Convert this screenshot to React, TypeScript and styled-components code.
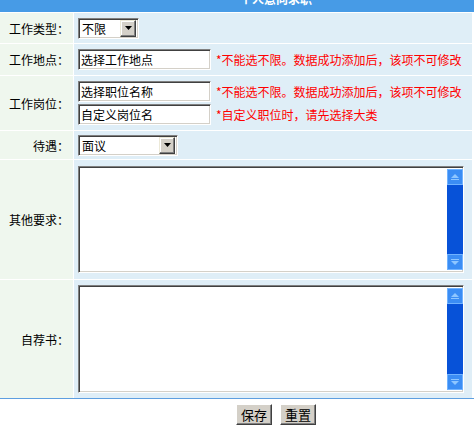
import React from "react";
import styled, { createGlobalStyle } from "styled-components";

const Global = createGlobalStyle`
  html, body { margin: 0; padding: 0; background: #ffffff; }
  body { font-family: "Noto Sans CJK SC", "Noto Sans", sans-serif; font-size: 12px; color: #000; }
  * { box-sizing: border-box; }
`;

const FONT = `"Noto Sans CJK SC", "Noto Sans", sans-serif`;

const Page = styled.div`
  width: 474px;
  background: #ffffff;
`;

const TitleBar = styled.div`
  height: 12px;
  background: #479be6;
  overflow: hidden;
  padding-left: 78px;
  text-align: center;
`;

const TitleText = styled.div`
  color: #ffffff;
  font-weight: bold;
  font-size: 12px;
  line-height: 12px;
  margin-top: -7px;
  font-family: ${FONT};
`;

const FormGrid = styled.div`
  width: 472px;
  display: grid;
  grid-template-columns: 73px 398px;
  column-gap: 1px;
  row-gap: 1px;
  padding-top: 1px;
  background: #ffffff;
`;

const Label = styled.div<{ $h: number }>`
  height: ${(p) => p.$h}px;
  background: #eff7ee;
  display: flex;
  align-items: center;
  justify-content: flex-end;
  padding-right: 4px;
  font-size: 12px;
  white-space: nowrap;
`;

const Field = styled.div<{ $h: number; $stack?: boolean }>`
  height: ${(p) => p.$h}px;
  background: #dfeef7;
  display: flex;
  flex-direction: ${(p) => (p.$stack ? "column" : "row")};
  align-items: ${(p) => (p.$stack ? "flex-start" : "center")};
  justify-content: ${(p) => (p.$stack ? "center" : "flex-start")};
  gap: ${(p) => (p.$stack ? "2px" : "5px")};
  padding-left: 4px;
`;

const SubRow = styled.div`
  display: flex;
  align-items: center;
  gap: 5px;
`;

const insetBorder = `
  border: 1px solid;
  border-color: #808080 #ffffff #ffffff #808080;
  box-shadow: inset 1px 1px 0 #404040, inset -1px -1px 0 #d4d0c8;
`;

const TextInput = styled.input`
  width: 133px;
  height: 21px;
  ${insetBorder}
  background: #ffffff;
  padding: 0 2px;
  font-family: ${FONT};
  font-size: 12px;
  color: #000;
  outline: none;
`;

const Note = styled.span`
  color: #ff0000;
  font-size: 12px;
  white-space: nowrap;
`;

const SelectBox = styled.div<{ $w: number }>`
  width: ${(p) => p.$w}px;
  height: 21px;
  ${insetBorder}
  background: #ffffff;
  display: flex;
  align-items: center;
  padding: 2px;
`;

const SelectValue = styled.span`
  flex: 1;
  font-size: 12px;
  padding-left: 1px;
  line-height: 15px;
  white-space: nowrap;
`;

const DropButton = styled.span`
  width: 16px;
  height: 17px;
  background: #d4d0c8;
  border: 1px solid;
  border-color: #ece9d8 #404040 #404040 #ece9d8;
  box-shadow: inset -1px -1px 0 #808080, inset 1px 1px 0 #ffffff;
  display: flex;
  align-items: center;
  justify-content: center;
`;

const AreaBox = styled.div<{ $h: number }>`
  width: 386px;
  height: ${(p) => p.$h}px;
  ${insetBorder}
  background: #ffffff;
  display: flex;
  padding: 2px 0 2px 2px;
`;

const TextArea = styled.textarea`
  flex: 1;
  border: none;
  outline: none;
  resize: none;
  overflow: hidden;
  font-family: ${FONT};
  font-size: 12px;
  background: #ffffff;
  padding: 1px;
`;

const ScrollBar = styled.div`
  width: 16px;
  background: #0752d8;
  display: flex;
  flex-direction: column;
  justify-content: space-between;
`;

const ScrollButton = styled.div`
  width: 16px;
  height: 16px;
  background: #3b8df4;
  border: 1px solid #6fb2ff;
  display: flex;
  align-items: center;
  justify-content: center;
`;

const Footer = styled.div`
  border-top: 1px solid #5e9fe0;
  height: 33px;
  display: flex;
  justify-content: center;
  align-items: flex-start;
  gap: 8px;
  padding-top: 5px;
  padding-left: 78px;
`;

const Button = styled.button`
  width: 36px;
  height: 21px;
  padding: 0;
  background: #d4d0c8;
  border: 1px solid;
  border-color: #ffffff #404040 #404040 #ffffff;
  box-shadow: inset -1px -1px 0 #808080;
  font-family: ${FONT};
  font-size: 13px;
  line-height: 17px;
  color: #000;
`;

const DownTriangle = () => (
  <svg width="7" height="4" viewBox="0 0 7 4">
    <polygon points="0,0 7,0 3.5,4" fill="#000" />
  </svg>
);

const ScrollArrow = ({ up }: { up?: boolean }) => (
  <svg width="10" height="8" viewBox="0 0 10 8">
    {up ? (
      <>
        <polygon points="1,5 5,1 9,5" fill="#8ec6ff" />
        <rect x="1" y="6" width="8" height="1" fill="#8ec6ff" />
      </>
    ) : (
      <>
        <rect x="1" y="1" width="8" height="1" fill="#8ec6ff" />
        <polygon points="1,3 9,3 5,7" fill="#8ec6ff" />
      </>
    )}
  </svg>
);

const Select = ({ w, value }: { w: number; value: string }) => (
  <SelectBox $w={w}>
    <SelectValue>{value}</SelectValue>
    <DropButton>
      <DownTriangle />
    </DropButton>
  </SelectBox>
);

const Area = ({ h }: { h: number }) => (
  <AreaBox $h={h}>
    <TextArea />
    <ScrollBar>
      <ScrollButton>
        <ScrollArrow up />
      </ScrollButton>
      <ScrollButton>
        <ScrollArrow />
      </ScrollButton>
    </ScrollBar>
  </AreaBox>
);

const NOTE1 = "*不能选不限。数据成功添加后，该项不可修改";

export default function App() {
  return (
    <Page>
      <Global />
      <TitleBar>
        <TitleText>个人意向求职</TitleText>
      </TitleBar>
      <FormGrid>
        <Label $h={30}>工作类型：</Label>
        <Field $h={30}>
          <Select w={61} value="不限" />
        </Field>

        <Label $h={31}>工作地点：</Label>
        <Field $h={31}>
          <TextInput defaultValue="选择工作地点" />
          <Note>{NOTE1}</Note>
        </Field>

        <Label $h={54}>工作岗位：</Label>
        <Field $h={54} $stack>
          <SubRow>
            <TextInput defaultValue="选择职位名称" />
            <Note>{NOTE1}</Note>
          </SubRow>
          <SubRow>
            <TextInput defaultValue="自定义岗位名" />
            <Note>*自定义职位时，请先选择大类</Note>
          </SubRow>
        </Field>

        <Label $h={28}>待遇：</Label>
        <Field $h={28}>
          <Select w={100} value="面议" />
        </Field>

        <Label $h={119}>其他要求：</Label>
        <Field $h={119}>
          <Area h={107} />
        </Field>

        <Label $h={118}>自荐书：</Label>
        <Field $h={118}>
          <Area h={108} />
        </Field>
      </FormGrid>
      <Footer>
        <Button type="button">保存</Button>
        <Button type="button">重置</Button>
      </Footer>
    </Page>
  );
}
